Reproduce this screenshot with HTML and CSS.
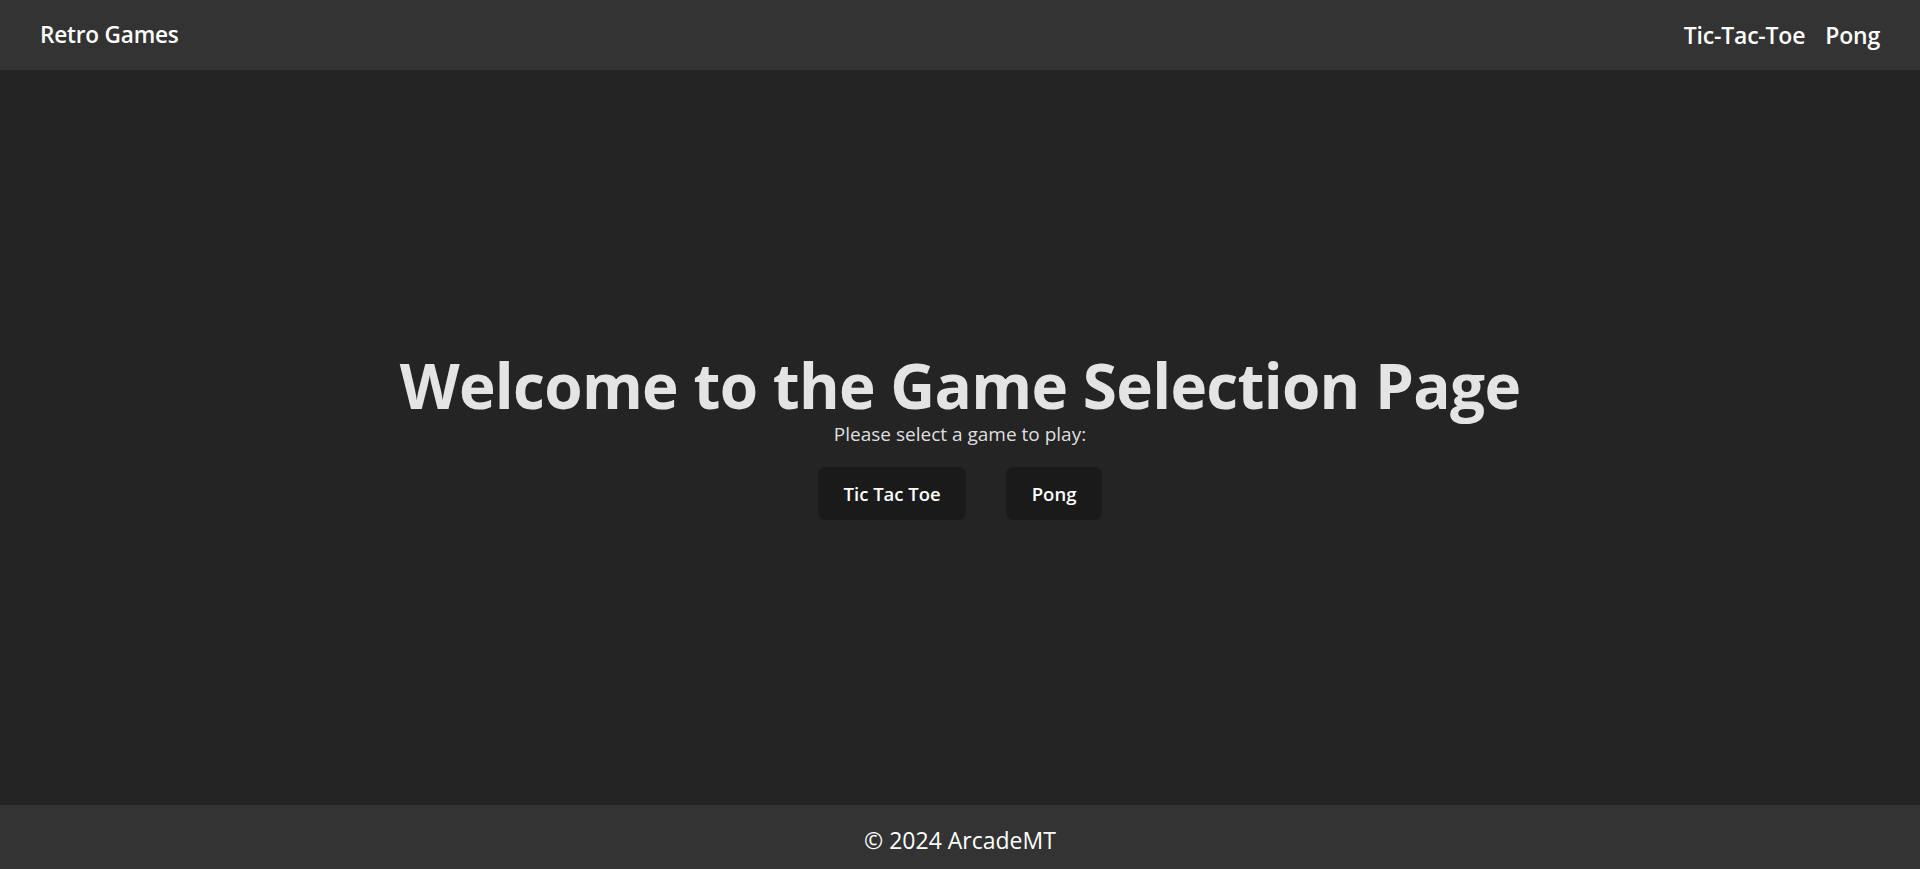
FILE: index.html
```html
<!DOCTYPE html>
<html lang="en">
<head>
<meta charset="utf-8">
<title>Retro Games</title>
<link rel="stylesheet" href="styles.css">
</head>
<body>
<div class="app">
  <header class="topbar">
    <a class="brand" href="#">Retro Games</a>
    <nav class="nav">
      <a href="#">Tic-Tac-Toe</a>
      <a href="#">Pong</a>
    </nav>
  </header>
  <main class="main">
    <h1 class="title">Welcome to the Game Selection Page</h1>
    <p class="subtitle">Please select a game to play:</p>
    <div class="buttons">
      <button class="btn btn-ttt">Tic Tac Toe</button>
      <button class="btn btn-pong">Pong</button>
    </div>
  </main>
  <footer class="footer">© 2024 ArcadeMT</footer>
</div>
</body>
</html>
```
FILE: styles.css
```css
* { box-sizing: border-box; }
html, body { margin: 0; padding: 0; height: 100%; }
body {
  font-family: "Open Sans", "Noto Sans", sans-serif;
  background: #242424;
  color: rgba(255, 255, 255, 0.87);
  line-height: 1.5;
}
.app {
  display: flex;
  flex-direction: column;
  height: 869px;
}
.topbar {
  height: 70px;
  flex: 0 0 70px;
  background: #333333;
  display: flex;
  align-items: center;
  justify-content: space-between;
  padding: 0 40px;
}
.brand, .nav a {
  color: #ffffff;
  text-decoration: none;
  font-size: 23px;
  font-weight: 600;
  letter-spacing: -0.2px;
}
.brand { font-size: 22.6px; }
.nav { display: flex; gap: 20px; }
.main {
  flex: 1;
  display: flex;
  flex-direction: column;
  align-items: center;
  justify-content: center;
  padding-bottom: 2px;
}
.title {
  margin: 0 0 4px;
  font-size: 62px;
  line-height: 64px;
  font-weight: 700;
  color: #e4e4e4;
  letter-spacing: -0.7px;
}
.subtitle {
  margin: 0;
  font-size: 19px;
  line-height: 26px;
}
.buttons {
  display: flex;
  gap: 40px;
  margin-top: 20px;
}
.btn {
  background: #1a1a1a;
  color: #ffffff;
  border: 1px solid transparent;
  border-radius: 8px;
  height: 53px;
  padding: 0 24.5px;
  font-family: inherit;
  font-size: 18.5px;
  font-weight: 600;
  cursor: pointer;
}
.footer {
  height: 64px;
  flex: 0 0 64px;
  background: #333333;
  color: #ffffff;
  display: flex;
  align-items: center;
  justify-content: center;
  font-size: 23px;
  padding-top: 7px;
}
```
